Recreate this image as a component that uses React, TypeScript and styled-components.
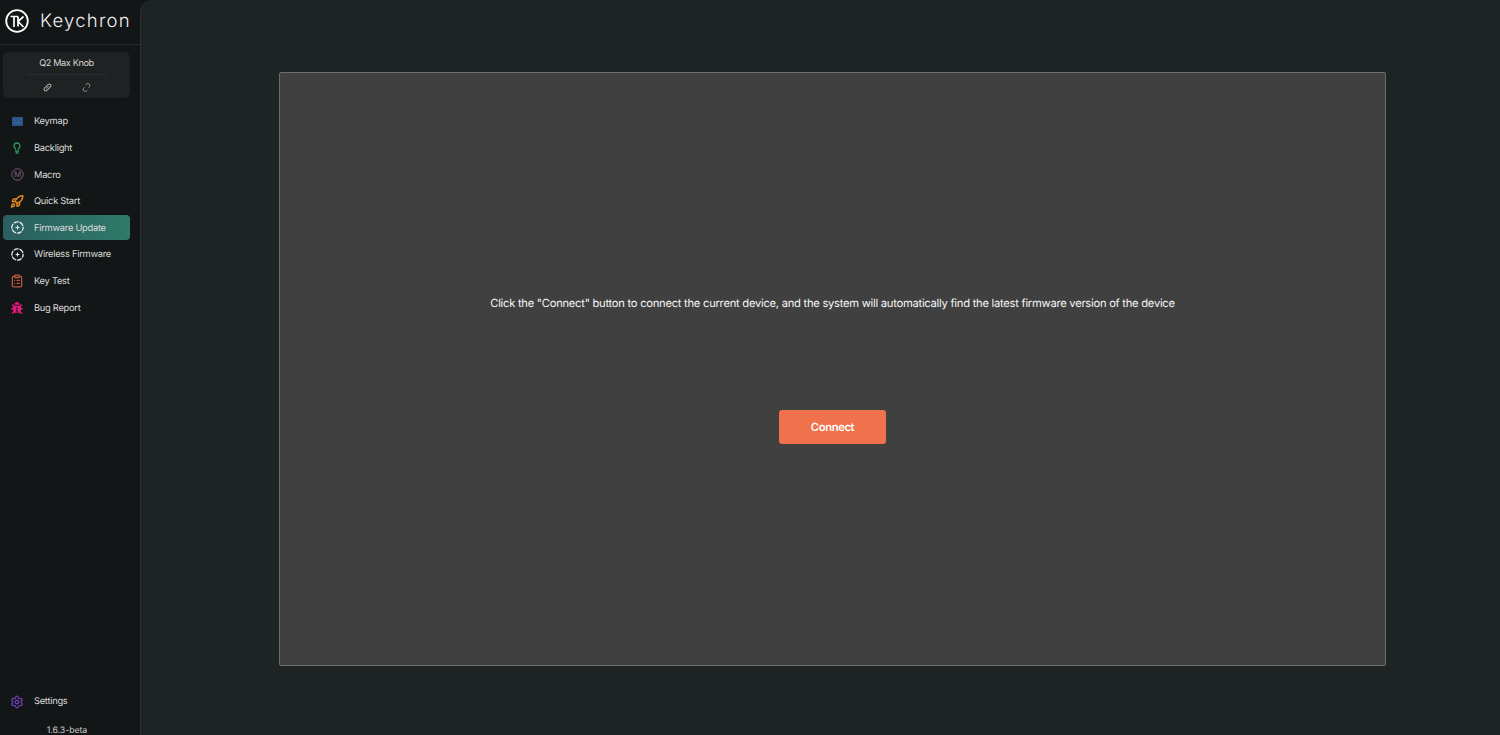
import React from 'react';
import styled, { createGlobalStyle } from 'styled-components';
import { ClipboardList, Lightbulb, Rocket, Settings } from 'lucide-react';
import { FaBug } from 'react-icons/fa';

const GlobalStyle = createGlobalStyle`
  html, body {
    margin: 0;
    padding: 0;
    height: 100%;
    background: #131616;
    overflow: hidden;
  }
  #root {
    height: 100%;
  }
`;

const Page = styled.div`
  width: 1500px;
  height: 735px;
  display: flex;
  background: #131616;
  font-family: Inter, "Liberation Sans", sans-serif;
  text-rendering: geometricPrecision;
`;

const Sidebar = styled.aside`
  width: 140px;
  flex-shrink: 0;
  display: flex;
  flex-direction: column;
`;

const Brand = styled.div`
  height: 45px;
  box-sizing: border-box;
  display: flex;
  align-items: center;
  gap: 11px;
  padding: 0 0 3px 5px;
  border-bottom: 1px solid #272b2b;

  svg {
    margin-top: 1px;
  }
`;

const BrandName = styled.span`
  font-size: 18.5px;
  font-weight: 300;
  letter-spacing: 1.25px;
  color: #eeeeee;
`;

const DeviceCard = styled.div`
  margin: 7px 10px 0 3px;
  height: 46px;
  border-radius: 6px;
  background: #1e2222;
  display: flex;
  flex-direction: column;
  align-items: center;
`;

const DeviceName = styled.div`
  width: 80px;
  height: 21px;
  padding-top: 1px;
  border-bottom: 1px solid #2a2e2e;
  font-size: 9.2px;
  letter-spacing: -0.4px;
  line-height: 21px;
  color: #d6d6d6;
  text-align: center;
  white-space: nowrap;
`;

const DeviceActions = styled.div`
  display: flex;
  gap: 30px;
  margin-top: 8px;
`;

const Nav = styled.nav`
  margin-top: 10.9px;
  display: flex;
  flex-direction: column;
  gap: 1.6px;
`;

const NavItem = styled.div<{ $active?: boolean }>`
  margin: 0 10px 0 3px;
  height: 25px;
  box-sizing: border-box;
  padding-left: 7px;
  display: flex;
  align-items: center;
  gap: 10px;
  border-radius: 4px;
  font-size: 9.3px;
  letter-spacing: -0.26px;
  color: #dddddd;
  background: ${(p) => (p.$active ? 'linear-gradient(90deg, #2a5f5f, #2f7a68)' : 'transparent')};
`;

const NavLabel = styled.span`
  padding-top: 1px;
`;

const IconSlot = styled.span<{ $color: string }>`
  width: 14px;
  height: 14px;
  display: flex;
  align-items: center;
  justify-content: center;
  color: ${(p) => p.$color};
`;

const SidebarFooter = styled.div`
  margin-top: auto;
  display: flex;
  flex-direction: column;
`;

const Version = styled.div`
  height: 16px;
  margin-top: 5px;
  padding-right: 6px;
  line-height: 24px;
  font-size: 8.8px;
  letter-spacing: -0.08px;
  color: #cfcfcf;
  text-align: center;
`;

const Main = styled.main`
  flex: 1;
  box-sizing: border-box;
  padding: 72px 114px 69px 138px;
  background: #1e2323;
  border-left: 1px solid #2b2f2f;
  border-top-left-radius: 12px;
  display: flex;
`;

const Panel = styled.section`
  flex: 1;
  box-sizing: border-box;
  padding-top: 222px;
  display: flex;
  flex-direction: column;
  align-items: center;
  background: #404040;
  border: 1px solid #6d6d6d;
  border-radius: 2px;
`;

const Message = styled.p`
  margin: 0;
  font-size: 11.2px;
  letter-spacing: -0.26px;
  line-height: 16px;
  color: #f6f6f6;
  white-space: nowrap;
`;

const ConnectButton = styled.button`
  margin-top: 99px;
  width: 107px;
  height: 34px;
  border: none;
  border-radius: 3px;
  background: #f0724c;
  color: #ffffff;
  font-family: inherit;
  font-size: 11.2px;
  letter-spacing: -0.35px;
  font-weight: 600;
  text-rendering: geometricPrecision;
`;

function LogoMark() {
  return (
    <svg width="24" height="24" viewBox="0 0 24 24" fill="none" stroke="#fff">
      <circle cx="12" cy="12" r="10.8" strokeWidth="1.8" />
      <path d="M5.5 7.5H13M9 7.5V18" strokeWidth="1.7" />
      <path d="M13 7.5V17.5M18.5 7.5L13 12.5L18.5 18" strokeWidth="1.7" />
    </svg>
  );
}

function LinkedIcon() {
  return (
    <svg width="9" height="9" viewBox="0 0 9 9" fill="none" stroke="#a8a8a8">
      <rect x="0.4" y="2.9" width="8.2" height="3.2" rx="1.6" transform="rotate(-45 4.5 4.5)" strokeWidth="1.1" />
      <path d="M3.4 5.6L5.6 3.4" strokeWidth="0.9" />
    </svg>
  );
}

function UnlinkedIcon() {
  return (
    <svg width="9" height="9" viewBox="0 0 9 9" fill="none" stroke="#a0a0a0" strokeWidth="1">
      <path d="M3.7 1.8L4.8 0.9C5.6 0.3 6.6 0.4 7.3 1.1C8 1.8 8 2.9 7.4 3.7L6.6 4.6" />
      <path d="M5.2 7.2L4.2 8.1C3.4 8.7 2.4 8.6 1.7 7.9C1 7.2 1 6.1 1.6 5.3L2.4 4.4" />
    </svg>
  );
}

function KeyboardIcon() {
  return (
    <svg width="11" height="9" viewBox="0 0 11 9">
      <rect width="11" height="9" rx="1" fill="#2c5488" />
      <path d="M2 3H4.5M6.5 3H9M2 6H9" stroke="#3e6ca6" strokeWidth="1" />
    </svg>
  );
}

function MacroIcon() {
  return (
    <svg width="13" height="13" viewBox="0 0 13 13" fill="none">
      <circle cx="6.5" cy="6.5" r="5.7" stroke="#7d5a7b" strokeWidth="1" />
      <text x="6.5" y="9.4" fontSize="8" textAnchor="middle" fill="#7d5a7b" fontFamily="Inter, sans-serif">
        M
      </text>
    </svg>
  );
}

function FirmwareIcon() {
  return (
    <svg width="13" height="13" viewBox="0 0 12 12" fill="none" stroke="#e6eeee">
      <circle cx="6" cy="6" r="5.2" strokeWidth="1.2" strokeDasharray="4.6 0.85" strokeDashoffset="1.5" />
      <path d="M4.2 6H7.8M6 4.2V7.8" strokeWidth="1" />
    </svg>
  );
}

const navItems = [
  { label: 'Keymap', color: '#2c5488', icon: <KeyboardIcon /> },
  { label: 'Backlight', color: '#2f9a63', icon: <Lightbulb size={12} strokeWidth={2.6} /> },
  { label: 'Macro', color: '#7d5a7b', icon: <MacroIcon /> },
  { label: 'Quick Start', color: '#dd8420', icon: <Rocket size={15} strokeWidth={2.6} /> },
  { label: 'Firmware Update', color: '#e6eeee', icon: <FirmwareIcon />, active: true },
  { label: 'Wireless Firmware', color: '#e6eeee', icon: <FirmwareIcon /> },
  { label: 'Key Test', color: '#b9583c', icon: <ClipboardList size={14} strokeWidth={2.2} /> },
  { label: 'Bug Report', color: '#e3177f', icon: <FaBug size={12} /> },
];

export default function App() {
  return (
    <Page>
      <GlobalStyle />
      <Sidebar>
        <Brand>
          <LogoMark />
          <BrandName>Keychron</BrandName>
        </Brand>
        <DeviceCard>
          <DeviceName>Q2 Max Knob</DeviceName>
          <DeviceActions>
            <LinkedIcon />
            <UnlinkedIcon />
          </DeviceActions>
        </DeviceCard>
        <Nav>
          {navItems.map((item) => (
            <NavItem key={item.label} $active={item.active}>
              <IconSlot $color={item.color}>{item.icon}</IconSlot>
              <NavLabel>{item.label}</NavLabel>
            </NavItem>
          ))}
        </Nav>
        <SidebarFooter>
          <NavItem>
            <IconSlot $color="#6a3fb0">
              <Settings size={14} strokeWidth={2.2} />
            </IconSlot>
            Settings
          </NavItem>
          <Version>1.6.3-beta</Version>
        </SidebarFooter>
      </Sidebar>
      <Main>
        <Panel>
          <Message>
            Click the "Connect" button to connect the current device, and the system will automatically find the latest
            firmware version of the device
          </Message>
          <ConnectButton>Connect</ConnectButton>
        </Panel>
      </Main>
    </Page>
  );
}
